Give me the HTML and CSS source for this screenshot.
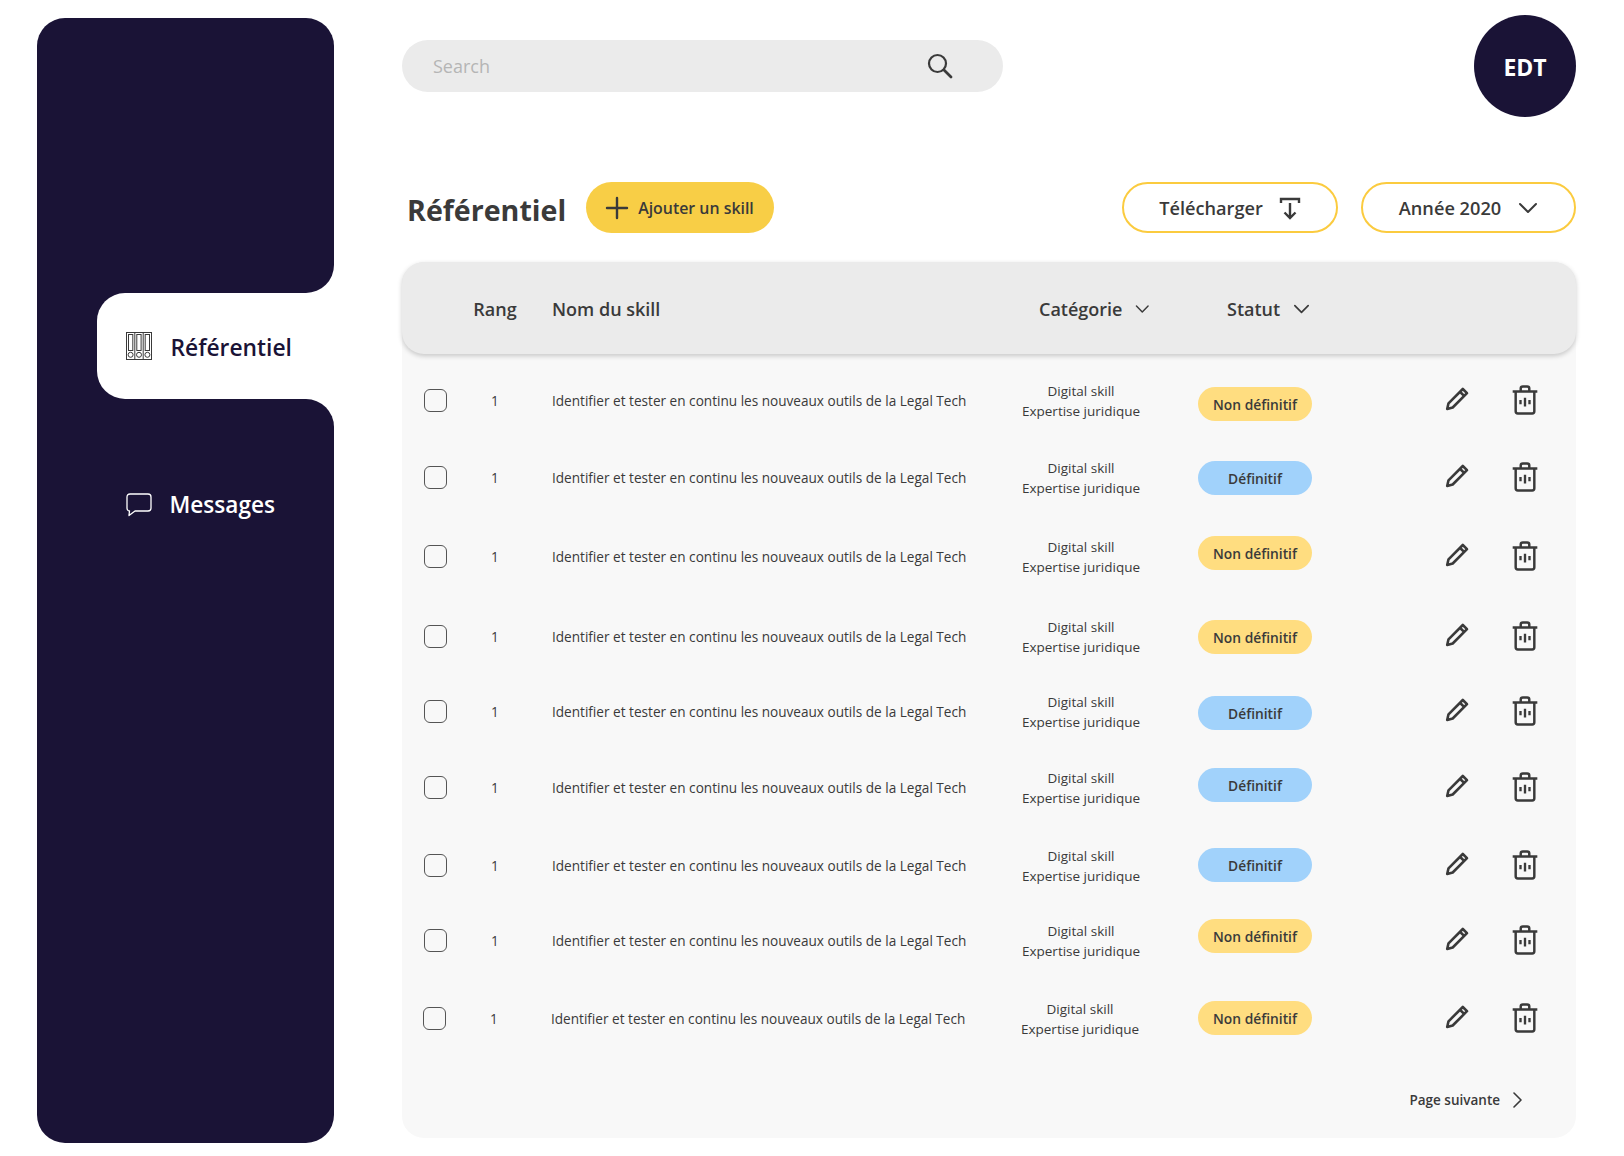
FILE: index.html
```html
<!DOCTYPE html>
<html lang="fr">
<head>
    <meta charset="UTF-8">
    <meta name="viewport" content="width=device-width, initial-scale=1.0">
    <title>Référentiel</title>
    <link rel="stylesheet" href="styles.css">
</head>
<body>
    <svg class="sprites" width="0" height="0">
        <symbol id="i-chevron" viewBox="0 0 20 12"><path d="M2 2l8 8 8-8" fill="none" stroke="currentColor" stroke-width="2" stroke-linecap="round" stroke-linejoin="round"/></symbol>
        <symbol id="i-pencil" viewBox="0 0 24 24"><path d="M17.800 2l4.200 4.200L7.700 20.500 2.200 22l1.300-5.700zM15.200 5l3.900 3.900" fill="none" stroke="currentColor" stroke-width="2.600" stroke-linejoin="round"/></symbol>
        <symbol id="i-trash" viewBox="0 0 24 28"><path d="M.5 6h23M8 6V3.200C8 2 8.800 1.300 10 1.300h4c1.200 0 2 .7 2 1.900V6M3.300 6v18.600c0 1.200.8 2 2 2h13.400c1.200 0 2-.8 2-2V6" fill="none" stroke="currentColor" stroke-width="2.300" stroke-linejoin="round"/><path d="M7.800 14v4M12 12v8M16.200 14v4" fill="none" stroke="currentColor" stroke-width="2.200"/></symbol>
    </svg>

    <div class="app">
        <aside class="sidebar">
            <div class="side-top"></div>
            <div class="side-tab-row">
                <a href="#" class="side-tab">
                    <svg class="binder" width="26" height="28" viewBox="0 0 26 28" fill="none" stroke="#3a3a3a">
                        <rect x=".5" y=".5" width="25" height="27"/>
                        <path d="M8.800.5v27M17.200.5v27"/>
                        <rect x="2.500" y="2.500" width="4.300" height="16"/>
                        <rect x="10.800" y="2.500" width="4.300" height="16"/>
                        <rect x="19.200" y="2.500" width="4.300" height="16"/>
                        <circle cx="4.600" cy="22.800" r="2.500"/>
                        <circle cx="13" cy="22.800" r="2.500"/>
                        <circle cx="21.400" cy="22.800" r="2.500"/>
                    </svg>
                    <span>Référentiel</span>
                </a>
            </div>
            <div class="side-bottom">
                <a href="#" class="side-link">
                    <svg width="26" height="24" viewBox="0 0 26 24" fill="none" stroke="#fff" stroke-width="1.300" stroke-linejoin="round">
                        <path d="M4 1h18c1.800 0 3 1.200 3 3v11c0 1.800-1.200 3-3 3H9l-6 4.500.5-4.500C2 18 1 16.800 1 15V4c0-1.800 1.200-3 3-3z"/>
                    </svg>
                    <span>Messages</span>
                </a>
            </div>
        </aside>

        <main class="main">
            <div class="topbar">
                <div class="search">
                    <span class="search-text">Search</span>
                    <svg width="26" height="26" viewBox="0 0 26 26" fill="none" stroke="#3a3a3a" stroke-width="2.200" stroke-linecap="round"><circle cx="10.500" cy="10.500" r="8.500"/><path d="M17 17l7 7" stroke-width="2.800"/></svg>
                </div>
                <div class="avatar">EDT</div>
            </div>

            <div class="toolbar">
                <h1>Référentiel</h1>
                <button class="btn-add">
                    <svg width="24" height="24" viewBox="0 0 24 24" stroke="#3a3a3a" stroke-width="2.400" stroke-linecap="round"><path d="M12 2v20M2 12h20"/></svg>
                    Ajouter un skill
                </button>
                <button class="btn-outline btn-download">
                    Télécharger
                    <svg width="24" height="24" viewBox="0 0 24 24" fill="none" stroke="#3a3a3a" stroke-width="2.400"><path d="M3 7V3h18v4M12 7v15M6.500 16.500L12 22l5.500-5.500"/></svg>
                </button>
                <button class="btn-outline btn-year">
                    Année 2020
                    <svg class="chev-big" width="20" height="12"><use href="#i-chevron"/></svg>
                </button>
            </div>

            <section class="card">
                <div class="thead">
                    <span></span>
                    <span class="col-rang">Rang</span>
                    <span class="col-name">Nom du skill</span>
                    <span class="th-cat">Catégorie <svg width="17" height="10"><use href="#i-chevron"/></svg></span>
                    <span class="th-status">Statut <svg width="17" height="10"><use href="#i-chevron"/></svg></span>
                </div>

                <div class="rows">
                    <div class="row">
                        <span class="check"></span>
                        <span class="col-rang">1</span>
                        <span class="col-name">Identifier et tester en continu les nouveaux outils de la Legal Tech</span>
                        <span class="col-cat">Digital skill<br>Expertise juridique</span>
                        <span class="col-status"><span class="pill pill-no">Non définitif</span></span>
                        <span class="actions"><svg class="pencil" width="24" height="24"><use href="#i-pencil"/></svg><svg width="26" height="30"><use href="#i-trash"/></svg></span>
                    </div>
                    <div class="row">
                        <span class="check"></span>
                        <span class="col-rang">1</span>
                        <span class="col-name">Identifier et tester en continu les nouveaux outils de la Legal Tech</span>
                        <span class="col-cat">Digital skill<br>Expertise juridique</span>
                        <span class="col-status"><span class="pill pill-yes">Définitif</span></span>
                        <span class="actions"><svg class="pencil" width="24" height="24"><use href="#i-pencil"/></svg><svg width="26" height="30"><use href="#i-trash"/></svg></span>
                    </div>
                    <div class="row">
                        <span class="check"></span>
                        <span class="col-rang">1</span>
                        <span class="col-name">Identifier et tester en continu les nouveaux outils de la Legal Tech</span>
                        <span class="col-cat">Digital skill<br>Expertise juridique</span>
                        <span class="col-status"><span class="pill pill-no">Non définitif</span></span>
                        <span class="actions"><svg class="pencil" width="24" height="24"><use href="#i-pencil"/></svg><svg width="26" height="30"><use href="#i-trash"/></svg></span>
                    </div>
                    <div class="row">
                        <span class="check"></span>
                        <span class="col-rang">1</span>
                        <span class="col-name">Identifier et tester en continu les nouveaux outils de la Legal Tech</span>
                        <span class="col-cat">Digital skill<br>Expertise juridique</span>
                        <span class="col-status"><span class="pill pill-no">Non définitif</span></span>
                        <span class="actions"><svg class="pencil" width="24" height="24"><use href="#i-pencil"/></svg><svg width="26" height="30"><use href="#i-trash"/></svg></span>
                    </div>
                    <div class="row">
                        <span class="check"></span>
                        <span class="col-rang">1</span>
                        <span class="col-name">Identifier et tester en continu les nouveaux outils de la Legal Tech</span>
                        <span class="col-cat">Digital skill<br>Expertise juridique</span>
                        <span class="col-status"><span class="pill pill-yes">Définitif</span></span>
                        <span class="actions"><svg class="pencil" width="24" height="24"><use href="#i-pencil"/></svg><svg width="26" height="30"><use href="#i-trash"/></svg></span>
                    </div>
                    <div class="row">
                        <span class="check"></span>
                        <span class="col-rang">1</span>
                        <span class="col-name">Identifier et tester en continu les nouveaux outils de la Legal Tech</span>
                        <span class="col-cat">Digital skill<br>Expertise juridique</span>
                        <span class="col-status"><span class="pill pill-yes">Définitif</span></span>
                        <span class="actions"><svg class="pencil" width="24" height="24"><use href="#i-pencil"/></svg><svg width="26" height="30"><use href="#i-trash"/></svg></span>
                    </div>
                    <div class="row">
                        <span class="check"></span>
                        <span class="col-rang">1</span>
                        <span class="col-name">Identifier et tester en continu les nouveaux outils de la Legal Tech</span>
                        <span class="col-cat">Digital skill<br>Expertise juridique</span>
                        <span class="col-status"><span class="pill pill-yes">Définitif</span></span>
                        <span class="actions"><svg class="pencil" width="24" height="24"><use href="#i-pencil"/></svg><svg width="26" height="30"><use href="#i-trash"/></svg></span>
                    </div>
                    <div class="row">
                        <span class="check"></span>
                        <span class="col-rang">1</span>
                        <span class="col-name">Identifier et tester en continu les nouveaux outils de la Legal Tech</span>
                        <span class="col-cat">Digital skill<br>Expertise juridique</span>
                        <span class="col-status"><span class="pill pill-no">Non définitif</span></span>
                        <span class="actions"><svg class="pencil" width="24" height="24"><use href="#i-pencil"/></svg><svg width="26" height="30"><use href="#i-trash"/></svg></span>
                    </div>
                    <div class="row">
                        <span class="check"></span>
                        <span class="col-rang">1</span>
                        <span class="col-name">Identifier et tester en continu les nouveaux outils de la Legal Tech</span>
                        <span class="col-cat">Digital skill<br>Expertise juridique</span>
                        <span class="col-status"><span class="pill pill-no">Non définitif</span></span>
                        <span class="actions"><svg class="pencil" width="24" height="24"><use href="#i-pencil"/></svg><svg width="26" height="30"><use href="#i-trash"/></svg></span>
                    </div>
                </div>

                <a href="#" class="next-page">
                    Page suivante
                    <svg width="10" height="16" viewBox="0 0 10 16" fill="none" stroke="#3a3a3a" stroke-width="1.600" stroke-linecap="round" stroke-linejoin="round"><path d="M2 1l7 7-7 7"/></svg>
                </a>
            </section>
        </main>
    </div>
</body>
</html>
```

FILE: styles.css
```css
body {
    margin: 0;
    background: #fff;
    color: #3a3a3a;
    font-family: "Open Sans", sans-serif;
}
a {
    color: inherit;
    text-decoration: none;
}
.sprites {
    position: absolute;
}
.app {
    display: flex;
    height: 1156px;
    overflow: hidden;
}

/* sidebar */
.sidebar {
    display: flex;
    flex-direction: column;
    width: 297.500px;
    height: 1125px;
    margin: 18px 0 0 36.500px;
}
.side-top {
    height: 275px;
    background: #1a1336;
    border-radius: 28px 28px 28px 0;
}
.side-tab-row {
    height: 106px;
    padding-left: 60px;
    background: #1a1336;
}
.side-tab {
    display: flex;
    align-items: center;
    gap: 19px;
    height: 106px;
    padding-left: 29px;
    background: #fff;
    border-radius: 28px 0 0 28px;
    color: #1a1336;
    font-size: 22.800px;
    font-weight: 600;
}
.side-tab span {
    margin-top: 2px;
}
.side-bottom {
    flex: 1;
    padding: 90px 0 0 89px;
    background: #1a1336;
    border-radius: 0 28px 28px 28px;
}
.side-link {
    display: flex;
    align-items: center;
    gap: 18px;
    color: #fff;
    font-size: 22.600px;
    font-weight: 600;
}

/* main column */
.main {
    width: 1174px;
    margin-left: 68px;
}
.topbar {
    display: flex;
    align-items: center;
    justify-content: space-between;
    height: 102px;
    margin-top: 15px;
}
.search {
    display: flex;
    align-items: center;
    justify-content: space-between;
    box-sizing: border-box;
    width: 601px;
    height: 52px;
    padding: 0 50px 0 31px;
    background: #ebebeb;
    border-radius: 26px;
}
.search-text {
    color: #b5b5b5;
    font-size: 18px;
}
.avatar {
    display: flex;
    align-items: center;
    justify-content: center;
    box-sizing: border-box;
    width: 102px;
    height: 102px;
    padding-top: 2px;
    background: #1a1336;
    border-radius: 50%;
    color: #fff;
    font-size: 23px;
    font-weight: 700;
}

/* toolbar */
.toolbar {
    display: flex;
    align-items: center;
    margin: 65px 0 29px;
    height: 51px;
}
.toolbar h1 {
    margin: 4px 20px 0 5px;
    font-size: 28.600px;
    font-weight: 700;
}
button {
    display: flex;
    align-items: center;
    box-sizing: border-box;
    height: 51px;
    border-radius: 26px;
    color: #3a3a3a;
    font-family: inherit;
}
.btn-add {
    gap: 9px;
    width: 188px;
    padding: 0 0 0 19px;
    background: #f8ce46;
    border: 0;
    font-size: 15.900px;
    font-weight: 600;
}
.btn-outline {
    justify-content: center;
    background: #fff;
    border: 2px solid #fbcb3f;
    font-size: 18.200px;
    font-weight: 600;
}
.btn-download {
    gap: 15px;
    width: 216px;
    padding: 0 0 0 1px;
    margin-left: auto;
}
.btn-year {
    gap: 17px;
    width: 215px;
    margin-left: 23px;
}
.chev-big {
    color: #3a3a3a;
}

/* table */
.card {
    height: 876px;
    background: #f8f8f8;
    border-radius: 22px;
}
.thead,
.row {
    display: grid;
    grid-template-columns: 24px 94px 470px 138px 162px 1fr;
    align-items: center;
    padding-left: 22px;
}
.thead {
    box-sizing: border-box;
    height: 92px;
    padding-top: 2px;
    background: #ebebeb;
    border-radius: 22px;
    box-shadow: 0 2px 5px rgba(0, 0, 0, .2);
    font-size: 18px;
    font-weight: 600;
}
.thead svg {
    margin-left: 13px;
}
.th-cat {
    display: flex;
    align-items: center;
    padding-left: 27px;
    white-space: nowrap;
}
.th-status {
    display: flex;
    align-items: center;
    padding-left: 77px;
    white-space: nowrap;
}
.rows {
    padding-top: 8.500px;
    font-size: 13.600px;
}
.row {
    height: 75px;
}

/* the rows in the mockup are not evenly spaced */
.row:nth-child(2) { margin-top: 2px; }
.row:nth-child(3) { margin-top: 4px; }
.row:nth-child(4) { margin-top: 5px; }
.row:nth-child(5) { margin-top: 0; }
.row:nth-child(6) { margin-top: 1px; }
.row:nth-child(7) { margin-top: 3px; }
.row:nth-child(8) { margin-top: 0; }
.row:nth-child(9) { margin-top: 3px; margin-left: -1px; }

.row:nth-child(1) .pill { margin-top: 8px; }
.row:nth-child(2) .pill { margin-top: 2px; }
.row:nth-child(3) .pill { margin-top: -6px; }
.row:nth-child(4) .pill { margin-top: 2px; }
.row:nth-child(5) .pill { margin-top: 4px; }
.row:nth-child(6) .pill { margin-top: -4px; }
.row:nth-child(8) .pill { margin-top: -8px; }
.row:nth-child(9) .pill { margin-left: 1px; }

.check {
    box-sizing: border-box;
    width: 23px;
    height: 23px;
    border: 1.500px solid #555;
    border-radius: 6px;
}
.col-rang {
    text-align: center;
}
.col-name {
    padding-left: 10px;
    white-space: nowrap;
}
.col-cat {
    padding-top: 3px;
    font-size: 13.500px;
    line-height: 19.500px;
    text-align: center;
    white-space: nowrap;
}
.col-status {
    padding-left: 48px;
}
.pill {
    display: flex;
    align-items: center;
    justify-content: center;
    width: 114px;
    height: 34px;
    border-radius: 17px;
    font-size: 13.800px;
    font-weight: 600;
}
.pill-no {
    background: #ffdd80;
}
.pill-yes {
    background: #a1d2fb;
}
.actions {
    display: flex;
    align-items: center;
    justify-content: flex-end;
    gap: 43px;
    padding-right: 38px;
}
.pencil {
    margin-bottom: 2px;
}
.next-page {
    display: flex;
    align-items: center;
    justify-content: flex-end;
    gap: 12px;
    margin: 35px 54px 0 0;
    font-size: 13.500px;
    font-weight: 600;
}
```
